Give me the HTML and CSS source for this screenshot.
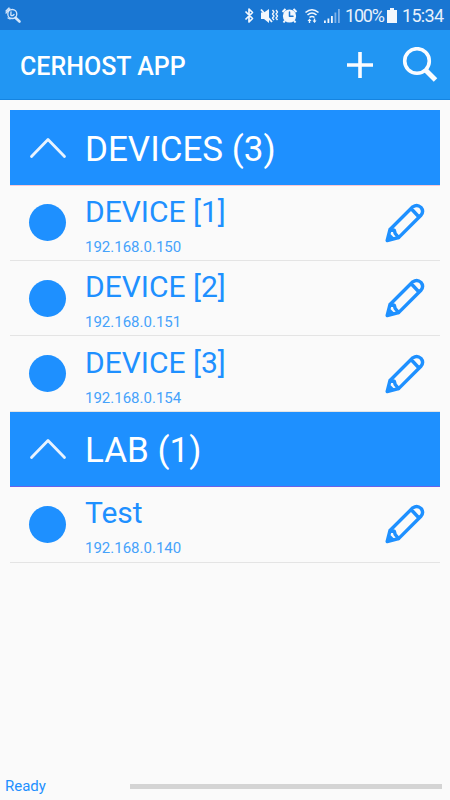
FILE: index.html
```
<!DOCTYPE html>
<html lang="en">
<head>
    <meta charset="UTF-8">
    <meta name="viewport" content="width=device-width, initial-scale=1.0">
    <title>CERHOST APP</title>
    <link rel="stylesheet" href="styles.css">
</head>
<body>
    <!-- shared icons -->
    <svg class="symbols" width="0" height="0">
        <symbol id="pencil" viewBox="0 0 40 40">
            <path d="M2.2 37.5L5 26.5L27.8 3.8Q32.2 0.7 36 4.4Q39.2 8.2 36 12.3L13.6 34.6ZM5 26.5L9.3 27.2L10.2 30.5L13.6 34.6M26.5 6L33.500 13.500M4 32L8 36" />
        </symbol>
        <symbol id="chevron" viewBox="0 0 38 22">
            <path d="M2.500 19.500L19 2.500L35.500 19.500" />
        </symbol>
    </svg>

    <div class="app">
        <div class="status-bar">
            <svg class="status-search" width="17" height="18" viewBox="0 0 17 18">
                <circle cx="7.3" cy="7" r="4.5" />
                <path d="M10.5 10.7L14.500 14.500" stroke-width="2.6" />
                <path d="M1 6L5 2M1 4L4 1M6 4.8L5.8 8Q7 9.5 9 7.5M3 11L5 12" />
            </svg>
            <div class="status-icons">
                <svg width="101" height="20" viewBox="0 0 101 20">
                    <path class="line" d="M1.500 6.500L8.500 13.500L5 17V4L8.500 7.500L1.500 14.500" stroke-width="1.7" />
                    <path class="fill" d="M17 7.500H20L25 4V18L20 14H17Z" />
                    <path class="line" d="M17 4.500L28 17" stroke-width="1.8" />
                    <path class="line" d="M28.500 5L30 7L28.500 9L30 11L28.500 13L30 15M32 5L33.500 7L32 9L33.500 11L32 13L33.500 15" stroke-width="1.3" />
                    <circle class="fill" cx="45.500" cy="11" r="6.6" />
                    <path class="line" d="M38.500 7L41.500 4M49.500 4L52.500 7M41 15.500L39.500 17.500M50 15.500L51.500 17.500" stroke-width="2" />
                    <path class="hand" d="M45.500 7V11.300H49" />
                    <path class="line" d="M61.500 7.500Q68 2 74.500 7.500M63.500 10Q68 6 72.500 10M65.500 12.500Q68 10.500 70.500 12.500" stroke-width="1.6" />
                    <path class="fill" d="M63.500 16L65.500 13.500L67.500 16H66.200V18H64.800V16ZM68.500 15.500L70.500 18L72.500 15.500H71.200V13.500H69.800V15.500Z" />
                    <path class="fill" d="M80 15.500h1.800v2.500H80zM83.500 13.500h1.800v4.500h-1.800zM87 11h1.800v7H87z" />
                    <path class="faint" d="M90.500 7.500h1.800v10.500h-1.800zM94 4h1.800v14h-1.800z" />
                </svg>
                <span class="battery-text">100%</span>
                <svg class="battery" width="10" height="15" viewBox="0 0 10 15">
                    <path class="fill" d="M3 0H7V2H10V15H0V2H3Z" />
                </svg>
                <span class="clock">15:34</span>
            </div>
        </div>

        <div class="toolbar">
            <h1>CERHOST APP</h1>
            <svg class="add" width="26" height="26" viewBox="0 0 26 26">
                <path d="M13 0V26M0 13H26" />
            </svg>
            <svg class="search" width="36" height="36" viewBox="0 0 36 36">
                <circle cx="15" cy="14" r="12.300" />
                <path d="M23.500 23L33.500 33" />
            </svg>
        </div>

        <div class="list">
            <div class="group first">
                <svg class="chevron"><use href="#chevron" /></svg>
                <h2>DEVICES (3)</h2>
            </div>
            <div class="device">
                <span class="dot"></span>
                <div class="info">
                    <h3>DEVICE [1]</h3>
                    <p>192.168.0.150</p>
                </div>
                <svg class="pencil"><use href="#pencil" /></svg>
            </div>
            <div class="device">
                <span class="dot"></span>
                <div class="info">
                    <h3>DEVICE [2]</h3>
                    <p>192.168.0.151</p>
                </div>
                <svg class="pencil"><use href="#pencil" /></svg>
            </div>
            <div class="device">
                <span class="dot"></span>
                <div class="info">
                    <h3>DEVICE [3]</h3>
                    <p>192.168.0.154</p>
                </div>
                <svg class="pencil"><use href="#pencil" /></svg>
            </div>
            <div class="group">
                <svg class="chevron"><use href="#chevron" /></svg>
                <h2>LAB (1)</h2>
            </div>
            <div class="device">
                <span class="dot"></span>
                <div class="info">
                    <h3>Test</h3>
                    <p>192.168.0.140</p>
                </div>
                <svg class="pencil"><use href="#pencil" /></svg>
            </div>
        </div>

        <div class="footer">
            <span>Ready</span>
            <div class="progress"></div>
        </div>
    </div>
</body>
</html>
```

FILE: styles.css
```
* {
    box-sizing: border-box;
}

body {
    margin: 0;
    background-color: #fafafa;
    font-family: Roboto, "Liberation Sans", sans-serif;
}

h1, h2, h3, p {
    margin: 0;
    font-weight: 400;
}

svg {
    display: block;
    flex-shrink: 0;
    fill: none;
    stroke-linecap: round;
    stroke-linejoin: round;
}

.symbols {
    position: absolute;
}

.app {
    display: flex;
    flex-direction: column;
    height: 800px;
}

/* Status bar */
.status-bar {
    display: flex;
    justify-content: space-between;
    height: 30px;
    padding: 0 6px 0 5px;
    background-color: #1976d2;
    color: #e8f1fb;
}

.status-search {
    margin-top: 7px;
    stroke: #d3e5fa;
    stroke-width: 1.3;
}

.status-icons {
    display: flex;
    align-items: center;
    font-size: 18px;
    line-height: 30px;
}

.status-icons span {
    padding-top: 2px;
}

.fill {
    fill: #f2f7fd;
}

.faint {
    fill: #7fb1e8;
}

.line {
    stroke: #f2f7fd;
    stroke-linecap: butt;
}

.hand {
    stroke: #1976d2;
    stroke-width: 1.5;
}

.battery-text {
    width: 42px;
    letter-spacing: -1.2px;
}

.battery {
    margin-right: 5px;
}

.clock {
    width: 42px;
    white-space: nowrap;
    letter-spacing: -0.7px;
}

/* Toolbar */
.toolbar {
    display: flex;
    align-items: center;
    height: 70px;
    padding: 0 12px 0 20px;
    background-color: #2196f3;
    border-bottom: 1px solid #1584e0;
    color: #fff;
}

.toolbar h1 {
    flex: 1;
    padding-top: 3px;
    font-size: 25px;
    font-weight: 500;
}

.toolbar svg {
    stroke: #fafcff;
    stroke-linecap: butt;
}

.add {
    margin-right: 29px;
    stroke-width: 3.6;
}

.search {
    stroke-width: 3.6;
}

.search path {
    stroke-width: 5;
}

/* Device list */
.list {
    flex: 1;
    padding: 10px 10px 0;
}

.group,
.device {
    display: flex;
    align-items: center;
    height: 75.4px;
    border-bottom: 1px solid #e4e4e4;
}

.group {
    padding-left: 19px;
    background-color: #1e90ff;
    border-bottom-color: #6a62e8;
    color: #fff;
}

.group.first {
    height: 75.6px;
    background-clip: padding-box;
    border-bottom-color: #f8c8d4;
}

.group h2 {
    margin-left: 18px;
    padding-top: 5px;
    font-size: 35px;
    line-height: 42px;
}

.chevron {
    width: 38px;
    height: 22px;
    margin-top: 1px;
    stroke: #e8f3ff;
    stroke-width: 2.8;
}

.device {
    padding: 0 15px 0 19px;
    color: #1e90ff;
}

.dot {
    width: 37px;
    height: 37px;
    border-radius: 50%;
    background-color: #1e90ff;
}

.info {
    flex: 1;
    margin-left: 19px;
    padding-top: 4px;
}

.info h3 {
    font-size: 30px;
    line-height: 36px;
}

.info p {
    margin-top: 8px;
    color: #46a2fa;
    font-size: 15px;
    line-height: 18px;
}

.pencil {
    width: 40px;
    height: 40px;
    stroke: #1e90ff;
    stroke-width: 3.4;
}

/* Footer */
.footer {
    display: flex;
    align-items: center;
    height: 28px;
    padding: 0 8px 0 5px;
    color: #1e90ff;
    font-size: 15px;
}

.footer span {
    width: 125px;
}

.progress {
    flex: 1;
    height: 5px;
    background-color: #d4d4d4;
}
```
